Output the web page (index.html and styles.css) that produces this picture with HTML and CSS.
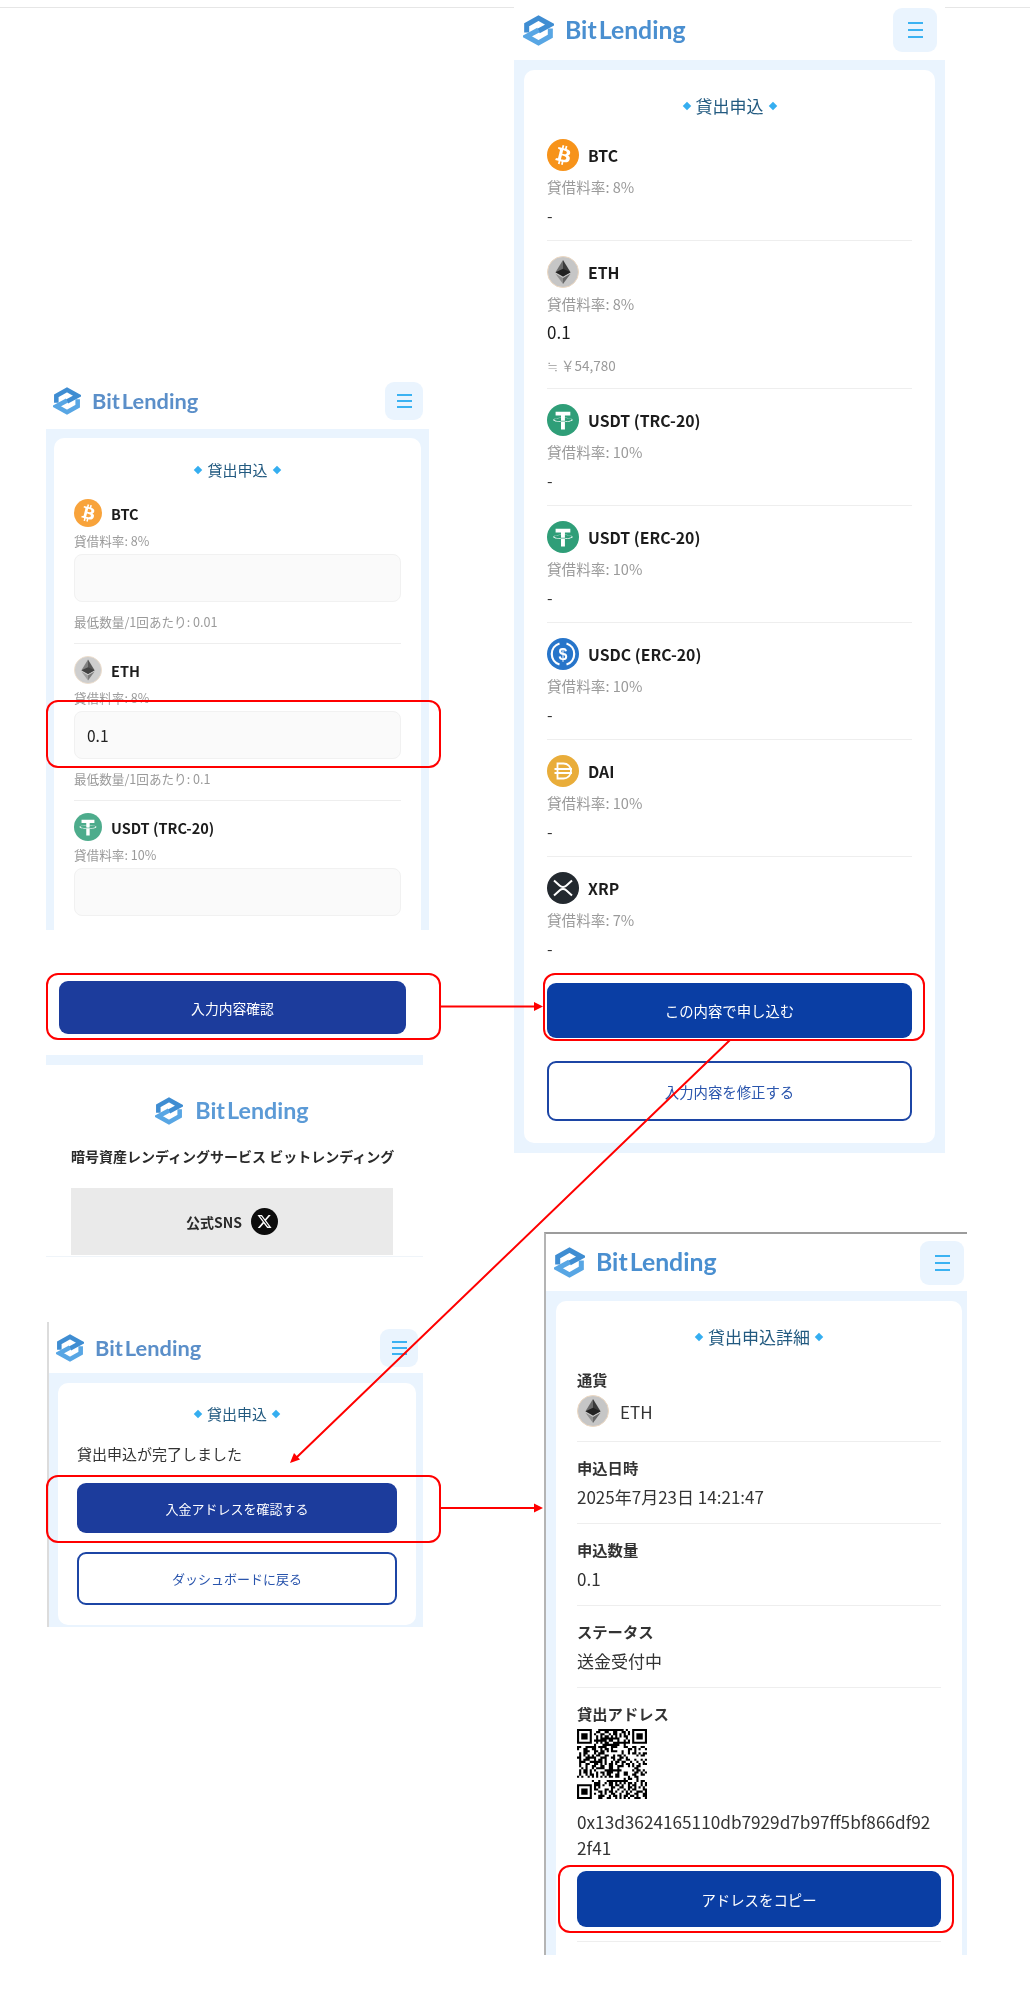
FILE: index.html
```html
<!DOCTYPE html>
<html lang="ja">
<head>
    <meta charset="UTF-8">
    <meta name="viewport" content="width=device-width, initial-scale=1.0">
    <title>BitLending 貸出申込フロー</title>
    <link rel="stylesheet" href="styles.css">
</head>
<body>
    <!-- icon sprite -->
    <svg class="sprite" xmlns="http://www.w3.org/2000/svg">
        <symbol id="logo" viewBox="0 0 32 32">
            <path d="M3.8 18V10L16 3.2l12.200 6.800L16 16.600" fill="none" stroke="#3f8dd2" stroke-width="5.200"/>
            <path d="M28.200 14v8L16 28.800 3.800 22 16 15.400" fill="none" stroke="#58a6e4" stroke-width="5.200"/>
        </symbol>
        <symbol id="btc" viewBox="0 0 32 32">
            <circle cx="16" cy="16" r="16" fill="#f7931a"/>
            <path fill="#fff" d="M23.189 14.02c.314-2.096-1.283-3.223-3.465-3.975l.708-2.84-1.728-.43-.69 2.765c-.454-.114-.92-.22-1.385-.326l.695-2.783L15.596 6l-.708 2.839c-.376-.086-.746-.17-1.104-.26l.002-.009-2.384-.595-.46 1.846s1.283.294 1.256.312c.7.175.826.638.805 1.006l-.806 3.235c.048.012.11.03.18.057l-.183-.045-1.13 4.532c-.086.212-.303.531-.793.41.018.025-1.256-.313-1.256-.313l-.858 1.978 2.25.561c.418.105.828.215 1.231.318l-.715 2.872 1.727.43.708-2.84c.472.127.93.245 1.378.357l-.706 2.828 1.728.43.715-2.866c2.948.558 5.164.333 6.097-2.333.752-2.146-.037-3.385-1.588-4.192 1.13-.26 1.98-1.003 2.207-2.538zm-3.95 5.538c-.533 2.147-4.148.986-5.32.695l.95-3.805c1.172.293 4.929.872 4.37 3.11zm.535-5.569c-.487 1.953-3.495.96-4.47.717l.86-3.45c.975.243 4.118.696 3.61 2.733z"/>
        </symbol>
        <symbol id="eth" viewBox="0 0 32 32">
            <circle cx="16" cy="16" r="15.5" fill="#c6c6c6" stroke="#ecd8c2"/>
            <path fill="#6b6b6b" d="M16 4l-7.5 12.3L16 20.500z"/>
            <path fill="#3a3a3a" d="M16 4l7.5 12.3L16 20.500z"/>
            <path fill="#222" d="M16 12.800l-7.500 3.500L16 20.500l7.500-4.200z"/>
            <path fill="#8f8f8f" d="M8.500 17.800L16 28v-6z"/>
            <path fill="#666" d="M23.500 17.800L16 28v-6z"/>
        </symbol>
        <symbol id="usdt" viewBox="0 0 32 32">
            <circle cx="16" cy="16" r="16" fill="#2f9e78"/>
            <path fill="#fff" d="M17.922 17.383v-.002c-.11.008-.677.042-1.942.042-1.01 0-1.721-.03-1.971-.042v.003c-3.888-.171-6.79-.848-6.79-1.658 0-.809 2.902-1.486 6.79-1.66v2.644c.254.018.982.061 1.988.061 1.207 0 1.812-.05 1.925-.06v-2.643c3.88.173 6.775.85 6.775 1.658 0 .81-2.895 1.485-6.775 1.657m0-3.59v-2.366h5.414V7.819H8.595v3.608h5.414v2.365c-4.4.202-7.709 1.074-7.709 2.118 0 1.044 3.309 1.915 7.709 2.118v7.582h3.913v-7.584c4.393-.202 7.694-1.073 7.694-2.116 0-1.043-3.301-1.914-7.694-2.117"/>
        </symbol>
        <symbol id="usdc" viewBox="0 0 32 32">
            <circle cx="16" cy="16" r="16" fill="#2775ca"/>
            <path d="M12.5 5.500a11 11 0 0 0 0 21M19.500 5.500a11 11 0 0 1 0 21" fill="none" stroke="#fff" stroke-width="2.200"/>
            <text x="16" y="21.500" text-anchor="middle" font-family="Liberation Sans" font-weight="700" font-size="16" fill="#fff">$</text>
        </symbol>
        <symbol id="dai" viewBox="0 0 32 32">
            <circle cx="16" cy="16" r="16" fill="#e9ad3a"/>
            <path d="M10.500 8.500h6a7.500 7.500 0 0 1 0 15h-6zM7.500 14H25M7.500 18H25" fill="none" stroke="#fff" stroke-width="1.800"/>
        </symbol>
        <symbol id="xrp" viewBox="0 0 32 32">
            <circle cx="16" cy="16" r="16" fill="#23292f"/>
            <path d="M7 8.500l5.800 5.200a4.800 4.800 0 0 0 6.400 0L25 8.500M7 23.500l5.800-5.200a4.800 4.800 0 0 1 6.400 0l5.800 5.200" fill="none" stroke="#fff" stroke-width="2"/>
        </symbol>
        <symbol id="x-mark" viewBox="0 0 24 24">
            <circle cx="12" cy="12" r="12" fill="#0c0c0c"/>
            <g transform="translate(5 5) scale(.583)"><path fill="#fff" d="M18.244 2.250h3.308l-7.227 8.260 8.502 11.240H16.170l-5.214-6.817L4.990 21.750H1.680l7.730-8.835L1.254 2.250H8.080l4.713 6.231zm-1.161 17.520h1.833L7.084 4.126H5.117z"/></g>
        </symbol>
    </svg>

    <div class="canvas">
        <div class="top-rule"></div>

        <!-- 入力画面 -->
        <section class="shot shot-form">
            <header class="app-header">
                <div class="logo"><svg class="logo-icon"><use href="#logo"/></svg><span class="wordmark">Bit<span class="wordmark-l">L</span>ending</span></div>
                <button class="menu-button"><span></span><span></span><span></span></button>
            </header>
            <main class="app-main">
                <div class="card">
                    <h2 class="card-title">貸出申込</h2>
                    <div class="coin-row">
                        <div class="coin-name"><svg class="coin-icon"><use href="#btc"/></svg>BTC</div>
                        <div class="coin-rate">貸借料率: 8%</div>
                        <input class="amount-input" type="text" value="">
                        <div class="coin-min">最低数量/1回あたり: 0.01</div>
                    </div>
                    <div class="coin-row">
                        <div class="coin-name"><svg class="coin-icon"><use href="#eth"/></svg>ETH</div>
                        <div class="coin-rate">貸借料率: 8%</div>
                        <input class="amount-input" type="text" value="0.1">
                        <div class="coin-min">最低数量/1回あたり: 0.1</div>
                    </div>
                    <div class="coin-row">
                        <div class="coin-name"><svg class="coin-icon"><use href="#usdt"/></svg>USDT (TRC-20)</div>
                        <div class="coin-rate">貸借料率: 10%</div>
                        <input class="amount-input" type="text" value="">
                    </div>
                </div>
            </main>
        </section>

        <button class="btn btn-primary btn-confirm">入力内容確認</button>

        <footer class="shot shot-footer">
            <div class="footer-strip"></div>
            <div class="logo footer-logo"><svg class="logo-icon"><use href="#logo"/></svg><span class="wordmark">Bit<span class="wordmark-l">L</span>ending</span></div>
            <p class="footer-text">暗号資産レンディングサービス ビットレンディング</p>
            <div class="sns-box">公式SNS<svg class="sns-icon"><use href="#x-mark"/></svg></div>
        </footer>

        <!-- 確認画面 -->
        <section class="shot shot-review">
            <header class="app-header">
                <div class="logo"><svg class="logo-icon"><use href="#logo"/></svg><span class="wordmark">Bit<span class="wordmark-l">L</span>ending</span></div>
                <button class="menu-button"><span></span><span></span><span></span></button>
            </header>
            <main class="app-main">
                <div class="card">
                    <h2 class="card-title">貸出申込</h2>
                    <div class="coin-row">
                        <div class="coin-name"><svg class="coin-icon"><use href="#btc"/></svg>BTC</div>
                        <div class="coin-rate">貸借料率: 8%</div>
                        <div class="coin-value">-</div>
                    </div>
                    <div class="coin-row">
                        <div class="coin-name"><svg class="coin-icon"><use href="#eth"/></svg>ETH</div>
                        <div class="coin-rate">貸借料率: 8%</div>
                        <div class="coin-value coin-value-big">0.1</div>
                        <div class="coin-yen">≒ ￥54,780</div>
                    </div>
                    <div class="coin-row">
                        <div class="coin-name"><svg class="coin-icon"><use href="#usdt"/></svg>USDT (TRC-20)</div>
                        <div class="coin-rate">貸借料率: 10%</div>
                        <div class="coin-value">-</div>
                    </div>
                    <div class="coin-row">
                        <div class="coin-name"><svg class="coin-icon"><use href="#usdt"/></svg>USDT (ERC-20)</div>
                        <div class="coin-rate">貸借料率: 10%</div>
                        <div class="coin-value">-</div>
                    </div>
                    <div class="coin-row">
                        <div class="coin-name"><svg class="coin-icon"><use href="#usdc"/></svg>USDC (ERC-20)</div>
                        <div class="coin-rate">貸借料率: 10%</div>
                        <div class="coin-value">-</div>
                    </div>
                    <div class="coin-row">
                        <div class="coin-name"><svg class="coin-icon"><use href="#dai"/></svg>DAI</div>
                        <div class="coin-rate">貸借料率: 10%</div>
                        <div class="coin-value">-</div>
                    </div>
                    <div class="coin-row coin-row-last">
                        <div class="coin-name"><svg class="coin-icon"><use href="#xrp"/></svg>XRP</div>
                        <div class="coin-rate">貸借料率: 7%</div>
                        <div class="coin-value">-</div>
                    </div>
                    <div class="btn-stack">
                        <button class="btn btn-primary btn-bright">この内容で申し込む</button>
                        <button class="btn btn-outline">入力内容を修正する</button>
                    </div>
                </div>
            </main>
        </section>

        <!-- 完了画面 -->
        <section class="shot shot-done">
            <header class="app-header">
                <div class="logo"><svg class="logo-icon"><use href="#logo"/></svg><span class="wordmark">Bit<span class="wordmark-l">L</span>ending</span></div>
                <button class="menu-button"><span></span><span></span><span></span></button>
            </header>
            <main class="app-main">
                <div class="card">
                    <h2 class="card-title">貸出申込</h2>
                    <p class="done-text">貸出申込が完了しました</p>
                    <div class="btn-stack">
                        <button class="btn btn-primary">入金アドレスを確認する</button>
                        <button class="btn btn-outline">ダッシュボードに戻る</button>
                    </div>
                </div>
            </main>
        </section>

        <!-- 詳細画面 -->
        <section class="shot shot-detail">
            <header class="app-header">
                <div class="logo"><svg class="logo-icon"><use href="#logo"/></svg><span class="wordmark">Bit<span class="wordmark-l">L</span>ending</span></div>
                <button class="menu-button"><span></span><span></span><span></span></button>
            </header>
            <main class="app-main">
                <div class="card">
                    <h2 class="card-title">貸出申込詳細</h2>
                    <div class="detail-row">
                        <div class="detail-label">通貨</div>
                        <div class="detail-coin"><svg class="coin-icon"><use href="#eth"/></svg>ETH</div>
                    </div>
                    <div class="detail-row">
                        <div class="detail-label">申込日時</div>
                        <div class="detail-value">2025年7月23日 14:21:47</div>
                    </div>
                    <div class="detail-row">
                        <div class="detail-label">申込数量</div>
                        <div class="detail-value">0.1</div>
                    </div>
                    <div class="detail-row">
                        <div class="detail-label">ステータス</div>
                        <div class="detail-value">送金受付中</div>
                    </div>
                    <div class="detail-row">
                        <div class="detail-label">貸出アドレス</div>
                        <svg class="qr-code" id="qr-code" viewBox="0 0 33 33"></svg>
                        <div class="address">0x13d3624165110db7929d7b97ff5bf866df922f41</div>
                        <button class="btn btn-primary btn-bright">アドレスをコピー</button>
                    </div>
                </div>
            </main>
        </section>

        <!-- 赤枠と矢印 -->
        <svg class="notes" viewBox="0 0 1030 2009">
            <g fill="none" stroke="#f00" stroke-width="2">
                <rect x="47" y="701" width="393" height="66" rx="11"/>
                <rect x="47" y="974" width="393" height="65" rx="11"/>
                <rect x="544" y="974" width="380" height="66" rx="11"/>
                <rect x="47" y="1476" width="393" height="66" rx="11"/>
                <rect x="559" y="1866" width="394" height="66" rx="11"/>
                <path d="M440 1006.5H536M440 1508H536M730 1040L296 1458"/>
            </g>
            <g fill="#f00">
                <path d="M543 1006.5l-9-4.500v9z"/>
                <path d="M543 1508l-9-4.500v9z"/>
                <path d="M290 1463l4-10 6 6.500z"/>
            </g>
        </svg>
    </div>

    <script src="qr.js"></script>
</body>
</html>
```

FILE: styles.css
```css
* {
    box-sizing: border-box;
}

html, body {
    margin: 0;
    padding: 0;
    background: #fff;
}

body {
    font-family: "Noto Sans CJK JP", "Noto Sans", sans-serif;
    color: #222;
}

.sprite {
    display: none;
}

.canvas {
    position: relative;
    width: 1030px;
    height: 2009px;
    overflow: hidden;
}

.top-rule {
    position: absolute;
    top: 7px;
    left: 0;
    width: 100%;
    height: 1px;
    background: #e6e6e6;
}

/* 貼り付けられたスクリーンショット */
.shot {
    position: absolute;
    background: #fff;
    overflow: hidden;
    filter: blur(0.35px);
    --coin: 32px;
    --title: 17px;
    --btn: 14.4px;
}

.shot-form {
    top: 372px;
    left: 46px;
    width: 383px;
    height: 558px;
    --coin: 28px;
    --title: 15px;
}

.shot-review {
    top: 0;
    left: 514px;
    width: 431px;
    height: 1153px;
}

.shot-done {
    top: 1322px;
    left: 47px;
    width: 376px;
    height: 305px;
    border-left: 2px solid #dcdcdc;
    --title: 15px;
    --btn: 13px;
}

.shot-detail {
    top: 1232px;
    left: 544px;
    width: 423px;
    height: 723px;
    border-top: 2px solid #9c9c9c;
    border-left: 2px solid #b4b4b4;
}

.shot-footer {
    top: 1055px;
    left: 46px;
    width: 377px;
    height: 202px;
    border-bottom: 1px solid #eff4f9;
}

/* ヘッダー */
.app-header {
    display: flex;
    align-items: center;
    justify-content: space-between;
    background: #fff;
}

.shot-form .app-header {
    height: 57px;
    padding: 0 6px 0 7px;
}

.shot-review .app-header {
    height: 60px;
    padding: 0 8px 0 9px;
}

.shot-done .app-header {
    height: 51px;
    padding: 0 5px 0 7px;
}

.shot-detail .app-header {
    height: 57px;
    padding: 0 3px 0 8px;
}

.logo {
    display: flex;
    align-items: center;
    gap: 11px;
}

.logo-icon {
    width: 31px;
    height: 31px;
}

.wordmark {
    font-family: "Lato", sans-serif;
    font-weight: 700;
    font-size: 24.8px;
    line-height: 1;
    color: #4a8fd0;
}

.wordmark-l {
    margin-left: 2px;
}

.shot-form .logo-icon,
.shot-footer .logo-icon,
.shot-done .logo-icon {
    width: 28px;
    height: 28px;
}

.shot-form .wordmark,
.shot-done .wordmark {
    font-size: 21.8px;
    color: #5b8fc9;
}

.shot-footer .wordmark {
    font-size: 23.3px;
    color: #5b9ad6;
}

.menu-button {
    display: flex;
    flex-direction: column;
    justify-content: center;
    align-items: center;
    gap: 5px;
    width: 44px;
    height: 44px;
    padding: 0;
    border: none;
    border-radius: 9px;
    background: #eaf4fe;
}

.shot-form .menu-button,
.shot-done .menu-button {
    width: 38px;
    height: 38px;
    gap: 4px;
}

.menu-button span {
    display: block;
    width: 15px;
    height: 2px;
    background: #3bb2f2;
}

/* 本文 */
.app-main {
    height: 100%;
    background: #eaf4fe;
}

.shot-form .app-main {
    padding: 9px 8px 0;
}

.shot-review .app-main {
    padding: 10px 10px 10px;
}

.shot-done .app-main {
    padding: 10px 7px 0 9px;
}

.shot-detail .app-main {
    padding: 10px 5px 0 10px;
}

.card {
    background: #fff;
    border-radius: 10px;
}

.shot-form .card {
    height: 520px;
    padding: 20px 20px 0;
}

.shot-review .card {
    height: 1073px;
    padding: 24px 23px 0;
}

.shot-done .card {
    height: 242px;
    padding: 19px 19px 0;
}

.shot-detail .card {
    height: 700px;
    padding: 24px 21px 0;
}

.card-title {
    display: flex;
    justify-content: center;
    align-items: center;
    gap: 6px;
    margin: 0;
    font-size: var(--title);
    font-weight: 400;
    line-height: 24px;
    color: #225a80;
}

.card-title::before,
.card-title::after {
    content: "";
    width: 6px;
    height: 6px;
    background: #35aef0;
    transform: rotate(45deg);
}

/* 通貨の行 */
.coin-row {
    border-bottom: 1px solid #eeeeee;
}

.coin-row:last-of-type,
.coin-row-last {
    border-bottom: none;
}

.shot-form .coin-row {
    padding: 12px 0 11px;
}

.shot-form .card-title {
    margin-bottom: 5px;
}

.shot-form .coin-icon {
    opacity: 0.85;
}

.shot-review .coin-row {
    padding: 15px 0 13px;
}

.shot-review .card-title {
    margin-bottom: 6px;
}

.coin-name {
    display: flex;
    align-items: center;
    gap: 9px;
    font-size: 15.8px;
    font-weight: 700;
    color: #1c1c1c;
}

.shot-form .coin-name {
    font-size: 14.5px;
}

.coin-icon {
    flex: none;
    width: var(--coin);
    height: var(--coin);
}

.coin-rate {
    margin-top: 4px;
    font-size: 14.6px;
    line-height: 24px;
    color: #9a9a9a;
}

.shot-form .coin-rate {
    font-size: 12.6px;
    line-height: 20px;
}

.coin-value {
    margin-top: 4px;
    font-size: 16px;
    line-height: 24px;
    color: #333;
}

.coin-value-big {
    font-size: 17px;
    color: #1c1c1c;
}

.coin-yen {
    margin-top: 11px;
    font-size: 13.5px;
    line-height: 20px;
    color: #9a9a9a;
}

.amount-input {
    display: block;
    width: 100%;
    height: 48px;
    margin-top: 3px;
    padding: 0 12px;
    border: 1px solid #f1f1f1;
    border-radius: 8px;
    background: #fafafa;
    font-family: inherit;
    font-size: 15.5px;
    color: #222;
}

.coin-min {
    margin-top: 10px;
    font-size: 12.6px;
    line-height: 20px;
    color: #9a9a9a;
}

/* ボタン */
.btn {
    display: block;
    width: 100%;
    padding: 0;
    border-radius: 9px;
    font-family: inherit;
    font-size: var(--btn);
    font-weight: 400;
}

.btn-primary {
    border: none;
    background: #1c3c9c;
    color: #fff;
}

.btn-bright {
    background: #0a3ea4;
}

.btn-outline {
    border: 2px solid #1c45a5;
    background: #fff;
    color: #2a55ad;
}

.btn-stack {
    display: flex;
    flex-direction: column;
}

.btn-confirm {
    position: absolute;
    top: 981px;
    left: 59px;
    width: 347px;
    height: 53px;
    font-size: 13.8px;
    filter: blur(0.35px);
}

.shot-review .btn-stack {
    gap: 23px;
    margin-top: 10px;
}

.shot-review .btn-primary {
    height: 55px;
}

.shot-review .btn-outline {
    height: 60px;
}

.shot-done .btn-stack {
    gap: 19px;
}

.shot-done .btn-primary {
    height: 50px;
}

.shot-done .btn-outline {
    height: 53px;
}

.done-text {
    margin: 16px 0 17px;
    font-size: 15px;
    line-height: 24px;
    color: #333;
}

/* 詳細画面 */
.detail-row {
    padding: 13px 0 14px;
    border-bottom: 1px solid #eeeeee;
}

.shot-detail .card-title {
    margin-bottom: 14px;
}

.detail-row:first-of-type {
    padding-top: 4px;
}

.detail-label {
    font-size: 15.3px;
    font-weight: 700;
    line-height: 24px;
    color: #333;
}

.detail-value {
    margin-top: 6px;
    font-size: 17px;
    line-height: 24px;
    color: #333;
}

.detail-coin {
    display: flex;
    align-items: center;
    gap: 11px;
    margin-top: 4px;
    font-size: 17px;
    color: #333;
}

.qr-code {
    display: block;
    width: 70px;
    height: 70px;
    margin-top: 4px;
}

.address {
    margin-top: 10px;
    padding-right: 7px;
    font-size: 17.2px;
    line-height: 26px;
    word-break: break-all;
    color: #333;
}

.shot-detail .btn {
    height: 56px;
    margin-top: 10px;
}

/* フッター */
.footer-strip {
    height: 10px;
    background: #eaf4fe;
}

.footer-logo {
    justify-content: center;
    margin: 32px 5px 0 0;
    gap: 12px;
}

.footer-text {
    width: 322px;
    margin: 19px 0 0 25px;
    font-size: 14px;
    font-weight: 700;
    line-height: 24px;
    text-align: center;
    white-space: nowrap;
    color: #2a2a2a;
}

.sns-box {
    display: flex;
    justify-content: center;
    align-items: center;
    gap: 9px;
    width: 322px;
    height: 67px;
    margin: 20px 0 0 25px;
    background: #eaeaea;
    font-size: 14px;
    font-weight: 700;
    color: #2a2a2a;
}

.sns-icon {
    width: 27px;
    height: 27px;
}

/* 注釈レイヤー */
.notes {
    position: absolute;
    top: 0;
    left: 0;
    width: 1030px;
    height: 2009px;
    pointer-events: none;
}
```

FILE: qr.js
```js
// QRコード風のパターンを描く
const size = 33;
const svg = document.getElementById('qr-code');
let seed = 20250723;

function next() {
    seed = (seed * 1103515245 + 12345) & 0x7fffffff;
    return (seed >> 12) & 1;
}

function inFinder(x, y) {
    const left = x < 8, right = x >= size - 8, top = y < 8, bottom = y >= size - 8;
    return (left && top) || (right && top) || (left && bottom);
}

let d = '';
for (let y = 0; y < size; y++) {
    for (let x = 0; x < size; x++) {
        if (!inFinder(x, y) && next()) {
            d += `M${x} ${y}h1v1h-1z`;
        }
    }
}

// 切り出しシンボル
[[0, 0], [size - 7, 0], [0, size - 7]].forEach(([x, y]) => {
    d += `M${x} ${y}h7v7h-7zM${x + 1} ${y + 1}v5h5v-5zM${x + 2} ${y + 2}h3v3h-3z`;
});

svg.innerHTML = `<path fill-rule="evenodd" d="${d}"/>`;
```
